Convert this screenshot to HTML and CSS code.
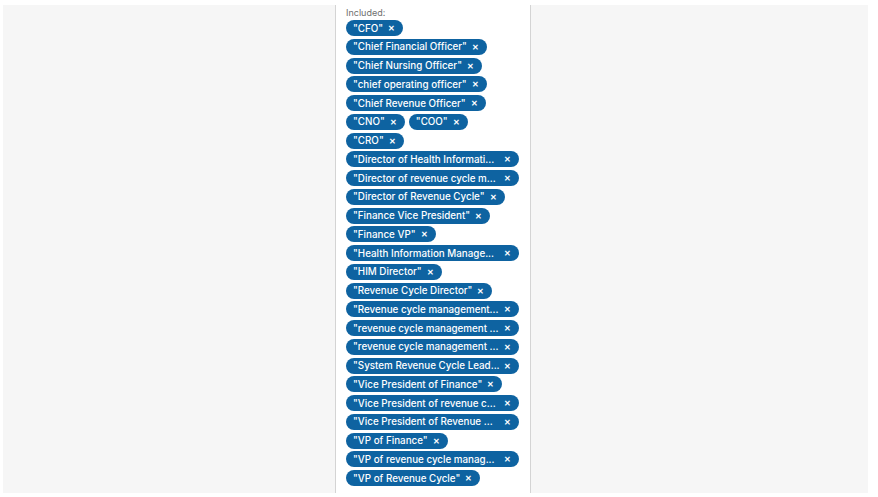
FILE: index.html
```html
<!DOCTYPE html>
<html>
<head>
<meta charset="utf-8">
<link rel="stylesheet" href="styles.css">
</head>
<body>
<div class="stage">
  <div class="panel">
    <div class="label">Included:</div>
    <div class="pills">
      <span class="pill"><span class="t">"CFO"</span><span class="x">✕</span></span>
      <span class="pill"><span class="t">"Chief Financial Officer"</span><span class="x">✕</span></span>
      <span class="pill"><span class="t">"Chief Nursing Officer"</span><span class="x">✕</span></span>
      <span class="pill"><span class="t">"chief operating officer"</span><span class="x">✕</span></span>
      <span class="pill"><span class="t">"Chief Revenue Officer"</span><span class="x">✕</span></span>
      <span class="pill"><span class="t">"CNO"</span><span class="x">✕</span></span>
      <span class="pill"><span class="t">"COO"</span><span class="x">✕</span></span>
      <span class="pill"><span class="t">"CRO"</span><span class="x">✕</span></span>
      <span class="pill long"><span class="t">"Director of Health Informati...</span><span class="x">✕</span></span>
      <span class="pill long"><span class="t">"Director of revenue cycle m...</span><span class="x">✕</span></span>
      <span class="pill"><span class="t">"Director of Revenue Cycle"</span><span class="x">✕</span></span>
      <span class="pill"><span class="t">"Finance Vice President"</span><span class="x">✕</span></span>
      <span class="pill"><span class="t">"Finance VP"</span><span class="x">✕</span></span>
      <span class="pill long"><span class="t">"Health Information Manage...</span><span class="x">✕</span></span>
      <span class="pill"><span class="t">"HIM Director"</span><span class="x">✕</span></span>
      <span class="pill"><span class="t">"Revenue Cycle Director"</span><span class="x">✕</span></span>
      <span class="pill long"><span class="t">"Revenue cycle management...</span><span class="x">✕</span></span>
      <span class="pill long"><span class="t">"revenue cycle management ...</span><span class="x">✕</span></span>
      <span class="pill long"><span class="t">"revenue cycle management ...</span><span class="x">✕</span></span>
      <span class="pill long"><span class="t">"System Revenue Cycle Lead...</span><span class="x">✕</span></span>
      <span class="pill"><span class="t">"Vice President of Finance"</span><span class="x">✕</span></span>
      <span class="pill long"><span class="t">"Vice President of revenue c...</span><span class="x">✕</span></span>
      <span class="pill long"><span class="t">"Vice President of Revenue ...</span><span class="x">✕</span></span>
      <span class="pill"><span class="t">"VP of Finance"</span><span class="x">✕</span></span>
      <span class="pill long"><span class="t">"VP of revenue cycle manag...</span><span class="x">✕</span></span>
      <span class="pill"><span class="t">"VP of Revenue Cycle"</span><span class="x">✕</span></span>
    </div>
  </div>
</div>
</body>
</html>
```

FILE: styles.css
```css
html, body {
  margin: 0;
  padding: 0;
  background: #ffffff;
}
body {
  width: 878px;
  height: 497px;
  overflow: hidden;
  font-family: Inter, "Noto Sans", sans-serif;
}
.stage {
  margin: 5px 10px 0 3px;
  height: 488px;
  background: #f6f6f6;
  display: flex;
  padding-left: 332px;
  box-sizing: border-box;
}
.panel {
  width: 196px;
  height: 100%;
  background: #ffffff;
  border-left: 1px solid #d4d4d4;
  border-right: 1px solid #d4d4d4;
  box-sizing: border-box;
  padding: 2px 4px 0 10px;
  overflow: hidden;
}
.label {
  font-size: 9px;
  color: #6e6e6e;
  line-height: 11px;
  margin-bottom: 2px;
}
.pills {
  display: flex;
  flex-wrap: wrap;
  column-gap: 4px;
  row-gap: 2.75px;
}
.pill {
  display: inline-flex;
  align-items: center;
  height: 16px;
  background: #0e63a1;
  color: #ffffff;
  border-radius: 8px;
  padding: 0 8px 0 7px;
  font-size: 9.8px;
  font-weight: 500;
  white-space: nowrap;
  box-sizing: border-box;
}
.pill .t {
  white-space: nowrap;
}
.pill .x {
  margin-left: 5px;
  font-size: 8px;
  font-weight: 700;
}
.pill.long {
  min-width: 173px;
}
.pill.long .x {
  margin-left: auto;
  padding-left: 4px;
}
```
